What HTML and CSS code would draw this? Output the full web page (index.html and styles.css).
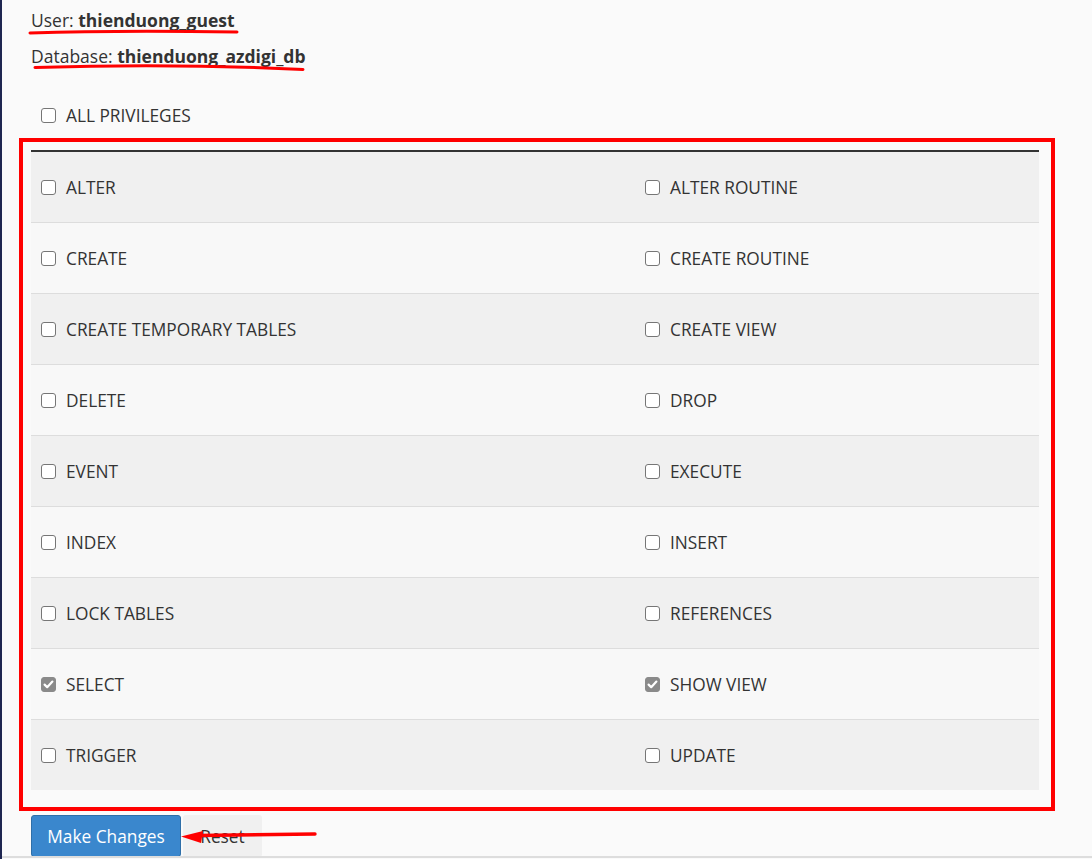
FILE: index.html
```html
<!DOCTYPE html>
<html>
<head>
<meta charset="utf-8">
<link rel="stylesheet" href="styles.css">
</head>
<body>
<div class="page">
  <div class="info">
    <p class="line">User: <b>thienduong_guest</b></p>
    <p class="line">Database: <b>thienduong_azdigi_db</b></p>
  </div>
  <label class="all"><span class="cb"></span>ALL PRIVILEGES</label>
  <div class="frame">
    <div class="grid">
      <div class="row"><label class="cell"><span class="cb"></span>ALTER</label><label class="cell"><span class="cb"></span>ALTER ROUTINE</label></div>
      <div class="row"><label class="cell"><span class="cb"></span>CREATE</label><label class="cell"><span class="cb"></span>CREATE ROUTINE</label></div>
      <div class="row"><label class="cell"><span class="cb"></span>CREATE TEMPORARY TABLES</label><label class="cell"><span class="cb"></span>CREATE VIEW</label></div>
      <div class="row"><label class="cell"><span class="cb"></span>DELETE</label><label class="cell"><span class="cb"></span>DROP</label></div>
      <div class="row"><label class="cell"><span class="cb"></span>EVENT</label><label class="cell"><span class="cb"></span>EXECUTE</label></div>
      <div class="row"><label class="cell"><span class="cb"></span>INDEX</label><label class="cell"><span class="cb"></span>INSERT</label></div>
      <div class="row"><label class="cell"><span class="cb"></span>LOCK TABLES</label><label class="cell"><span class="cb"></span>REFERENCES</label></div>
      <div class="row"><label class="cell"><span class="cb checked"><svg viewBox="0 0 15 15" width="15" height="15"><path d="M3.6 7.6 L6.2 10.2 L11.4 4.6" fill="none" stroke="#fff" stroke-width="2.2" stroke-linecap="round" stroke-linejoin="round"/></svg></span>SELECT</label><label class="cell"><span class="cb checked"><svg viewBox="0 0 15 15" width="15" height="15"><path d="M3.6 7.6 L6.2 10.2 L11.4 4.6" fill="none" stroke="#fff" stroke-width="2.2" stroke-linecap="round" stroke-linejoin="round"/></svg></span>SHOW VIEW</label></div>
      <div class="row"><label class="cell"><span class="cb"></span>TRIGGER</label><label class="cell"><span class="cb"></span>UPDATE</label></div>
    </div>
  </div>
  <div class="actions">
    <button class="btn primary">Make Changes</button>
    <button class="btn reset">Reset</button>
  </div>
  <div class="footer-line"></div>
  <svg class="marks" width="1092" height="859" viewBox="0 0 1092 859">
    <path d="M30 33 C 90 31, 170 31, 237 32" fill="none" stroke="#f00" stroke-width="3" stroke-linecap="round"/>
    <path d="M35 67.5 C 120 65, 220 65.5, 303 69.5" fill="none" stroke="#f00" stroke-width="3" stroke-linecap="round"/>
    <path d="M315 834 L 198 835.5" fill="none" stroke="#f00" stroke-width="3.4" stroke-linecap="round"/>
    <path d="M181 836.5 L 203 831 L 201 843 Z" fill="#f00"/>
  </svg>
</div>
</body>
</html>
```
FILE: styles.css
```css
html, body {
  margin: 0;
  padding: 0;
  background: #fafafa;
}
body {
  font-family: "Open Sans", "Liberation Sans", sans-serif;
  font-size: 17.3px;
  color: #333;
  overflow: hidden;
}
.page {
  position: relative;
  height: 859px;
  border-left: 2px solid #1e2650;
  box-sizing: border-box;
  padding-left: 29px;
  padding-right: 37px;
}
.info {
  padding-top: 8px;
  font-size: 17.5px;
}
.line {
  margin: 0 0 12px 0;
  line-height: 24px;
}
.line b {
  font-weight: 700;
}
.all {
  display: flex;
  align-items: center;
  margin: 35px 0 0 10px;
  height: 24px;
}
.cb {
  display: inline-block;
  box-sizing: border-box;
  width: 15px;
  height: 15px;
  border: 1px solid #767676;
  border-radius: 3px;
  background: #fff;
  margin-right: 10px;
  flex: none;
}
.cb svg {
  display: block;
  margin: -1px;
}
.cb.checked {
  background: #8a8a8a;
  border-color: #8a8a8a;
}
.frame {
  margin: 11px 0 0 -12px;
  border: 4px solid #f00;
  padding: 8px 12px 17px 8px;
  width: 1008px;
}
.grid {
  border-top: 2px solid #333;
}
.row {
  display: grid;
  grid-template-columns: 604px 1fr;
  height: 71px;
  box-sizing: border-box;
  background: #f8f8f8;
  border-top: 1px solid #ddd;
}
.row:first-child {
  border-top: none;
  height: 70px;
}
.row:nth-child(odd) {
  background: #f0f0f0;
}
.cell {
  display: flex;
  align-items: center;
  padding-left: 10px;
}
.actions {
  display: flex;
  margin-top: 4px;
  gap: 2px;
  height: 42px;
}
.btn {
  font-family: "Open Sans", "Liberation Sans", sans-serif;
  font-size: 17.3px;
  border-radius: 3px;
  height: 42px;
  box-sizing: border-box;
  cursor: pointer;
}
.primary {
  background: #3a87cd;
  color: #fff;
  border: 1px solid #2f6fa8;
  width: 150px;
}
.reset {
  background: #f0f0f0;
  color: #333;
  border: none;
  width: 79px;
}
.footer-line {
  position: absolute;
  left: 0;
  right: 0;
  top: 856px;
  height: 2px;
  background: #ddd;
}
.marks {
  position: absolute;
  left: -2px;
  top: 0;
  pointer-events: none;
}
```
